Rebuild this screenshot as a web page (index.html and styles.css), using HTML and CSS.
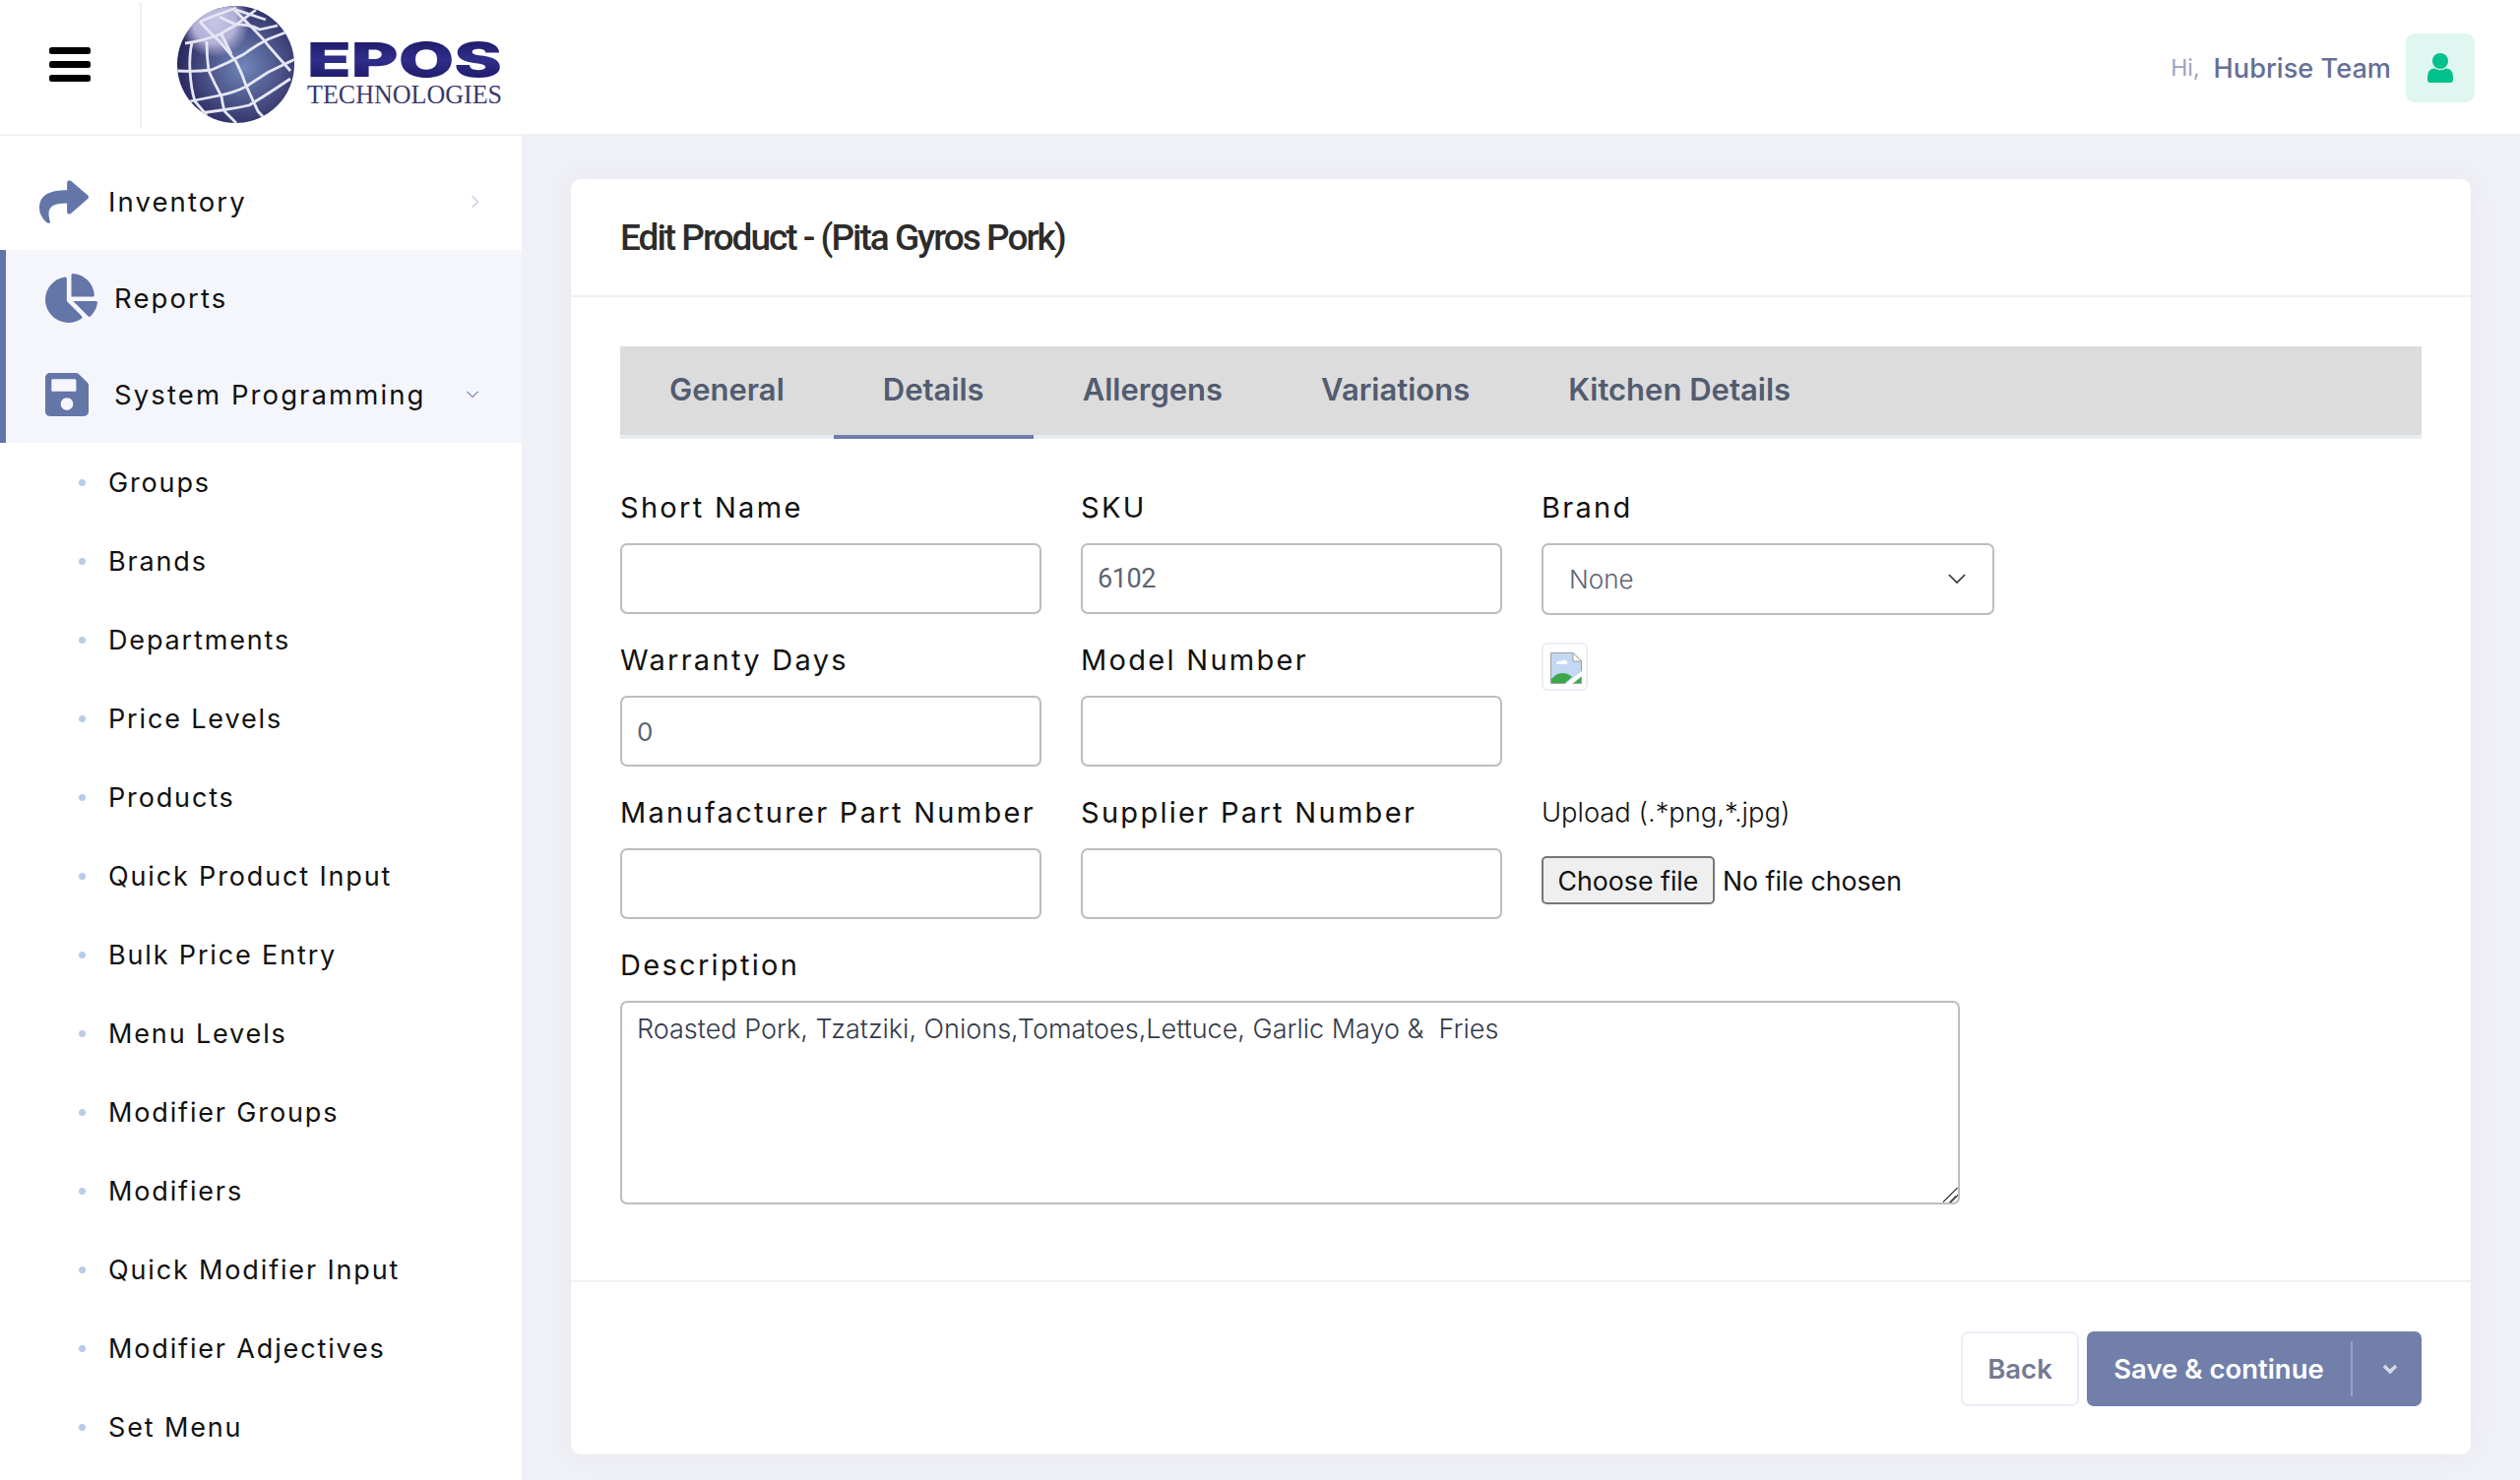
FILE: index.html
```html
<!DOCTYPE html>
<html lang="en">
<head>
    <meta charset="UTF-8">
    <title>Edit Product</title>
    <link rel="stylesheet" href="styles.css">
</head>
<body>
    <header class="topbar">
        <div class="burger-wrap">
            <svg class="burger" viewBox="0 0 42 35" width="42" height="35"><rect width="42" height="7" rx="2.5"/><rect y="14" width="42" height="7" rx="2.5"/><rect y="28" width="42" height="7" rx="2.5"/></svg>
        </div>
        <svg class="logo" viewBox="0 0 360 135" width="360" height="135">
            <defs>
                <radialGradient id="globeFill" cx="57%" cy="52%" r="58%">
                    <stop offset="0" stop-color="#7086b8"/>
                    <stop offset="0.55" stop-color="#4a5288"/>
                    <stop offset="1" stop-color="#27255c"/>
                </radialGradient>
                <radialGradient id="globeTop" cx="32%" cy="14%" r="30%">
                    <stop offset="0" stop-color="#c8c5e6"/>
                    <stop offset="0.6" stop-color="#b4b1d8"/>
                    <stop offset="1" stop-color="#b4b1d8" stop-opacity="0"/>
                </radialGradient>
                <linearGradient id="eposFill" x1="0" y1="0" x2="0" y2="1">
                    <stop offset="0" stop-color="#17105a"/>
                    <stop offset="0.5" stop-color="#2f2e8a"/>
                    <stop offset="1" stop-color="#17105a"/>
                </linearGradient>
                <clipPath id="globeClip"><circle cx="79.5" cy="65.5" r="59.5"/></clipPath>
            </defs>
            <circle cx="79.5" cy="65.5" r="59.5" fill="url(#globeFill)"/>
            <circle cx="79.5" cy="65.5" r="59.5" fill="url(#globeTop)"/>
            <g class="globe-lines" clip-path="url(#globeClip)">
                <path d="M28 44Q45 42 63 35L80 25Q92 24 104 30L122 26"/>
                <path d="M20 72Q40 73 55 71Q72 64 88 55Q100 46 112 40L130 33"/>
                <path d="M33 103Q48 100 63 97Q78 94 90 88Q102 80 113 73L140 60"/>
                <path d="M43 115L65 112Q80 110 93 107Q108 98 120 90L135 80"/>
                <path d="M43 22Q52 32 63 42Q72 52 80 63Q86 75 90 87Q96 100 102 113L112 124"/>
                <path d="M78 10Q90 22 100 32Q108 40 113 47L135 72"/>
                <path d="M35 43Q32 57 33 72Q34 90 38 103L50 117"/>
                <path d="M50 42Q50 57 52 72Q58 85 65 98Q66 105 68 113L80 125"/>
                <path d="M65 35L75 55"/>
                <path d="M43 22Q60 15 80 8"/>
                <path d="M80 10Q95 15 110 20"/>
                <path d="M63 17Q72 22 80 25L100 10"/>
            </g>
            <text class="logo-epos" x="152" y="78" textLength="198" lengthAdjust="spacingAndGlyphs" fill="url(#eposFill)">EPOS</text>
            <text class="logo-tech" x="152" y="105" textLength="198" lengthAdjust="spacingAndGlyphs">TECHNOLOGIES</text>
        </svg>
        <div class="user">
            <span class="user-hi">Hi,</span>
            <span class="user-name">Hubrise Team</span>
            <span class="avatar">
                <svg viewBox="0 0 26 30" width="26" height="30"><circle cx="13" cy="8" r="8"/><path d="M7 15.500Q13 19 19 15.500Q26 16 26 24V27Q26 30 23 30H3Q0 30 0 27V24Q0 16 7 15.500Z"/></svg>
            </span>
        </div>
    </header>

    <div class="layout">
        <nav class="sidebar">
            <a class="menu-item">
                <span class="menu-icon"><svg viewBox="0 0 512 512" width="50" height="50"><path d="M503.691 189.836L327.687 37.851C312.281 24.546 288 35.347 288 56.015v80.053C127.371 137.907 0 170.1 0 322.326c0 61.441 39.581 122.309 83.333 154.132 13.653 9.931 33.111-2.533 28.077-18.631C66.066 312.814 132.917 274.316 288 272.085V360c0 20.7 24.3 31.453 39.687 18.164l176.004-152c11.071-9.562 11.086-26.753 0-36.328z"/></svg></span>
                <span class="menu-text">Inventory</span>
                <svg class="menu-arrow arrow-right" viewBox="0 0 10 16" width="8" height="14"><path d="M1 1l7 7-7 7"/></svg>
            </a>
            <div class="menu-open">
                <a class="menu-item">
                    <span class="menu-icon"><svg viewBox="0 0 544 512" width="53" height="50"><path d="M527.79 288H290.5l158.03 158.03c6.04 6.04 15.98 6.53 22.19.68 38.7-36.46 65.32-85.61 73.13-140.86 1.34-9.46-6.51-17.85-16.06-17.85zm-15.83-64.8C503.72 103.74 408.26 8.28 288.8.04 279.68-.59 272 7.1 272 16.24V240h223.77c9.14 0 16.82-7.68 16.19-16.8zM224 288V50.71c0-9.55-8.39-17.4-17.84-16.06C86.99 51.49-4.1 155.6.14 280.37 4.5 408.51 114.83 513.59 243.03 511.98c50.4-.63 96.97-16.87 135.26-44.03 7.9-5.6 8.42-17.23 1.57-24.08L224 288z"/></svg></span>
                    <span class="menu-text">Reports</span>
                </a>
                <a class="menu-item">
                    <span class="menu-icon"><svg viewBox="0 32 448 448" width="44" height="44"><path d="M433.941 129.941l-83.882-83.882A48 48 0 0 0 316.118 32H48C21.49 32 0 53.49 0 80v352c0 26.51 21.49 48 48 48h352c26.51 0 48-21.49 48-48V163.882a48 48 0 0 0-14.059-33.941zM224 416c-35.346 0-64-28.654-64-64 0-35.346 28.654-64 64-64s64 28.654 64 64c0 35.346-28.654 64-64 64zm96-304.52V212c0 6.627-5.373 12-12 12H76c-6.627 0-12-5.373-12-12V108c0-6.627 5.373-12 12-12h228.52c3.183 0 6.235 1.264 8.485 3.515l3.48 3.48A11.996 11.996 0 0 1 320 111.48z"/></svg></span>
                    <span class="menu-text">System Programming</span>
                    <svg class="menu-arrow arrow-down" viewBox="0 0 16 10" width="14" height="8"><path d="M1 1l7 7 7-7"/></svg>
                </a>
            </div>
            <ul class="submenu">
                <li>Groups</li>
                <li>Brands</li>
                <li>Departments</li>
                <li>Price Levels</li>
                <li>Products</li>
                <li>Quick Product Input</li>
                <li>Bulk Price Entry</li>
                <li>Menu Levels</li>
                <li>Modifier Groups</li>
                <li>Modifiers</li>
                <li>Quick Modifier Input</li>
                <li>Modifier Adjectives</li>
                <li>Set Menu</li>
            </ul>
        </nav>

        <main class="content">
            <section class="card">
                <div class="card-head">
                    <h1>Edit Product - (Pita Gyros Pork)</h1>
                </div>
                <div class="card-body">
                    <div class="tabs">
                        <a class="tab">General</a>
                        <a class="tab active">Details</a>
                        <a class="tab">Allergens</a>
                        <a class="tab">Variations</a>
                        <a class="tab">Kitchen Details</a>
                    </div>
                    <form class="form-grid">
                        <div class="field">
                            <label>Short Name</label>
                            <input type="text">
                        </div>
                        <div class="field">
                            <label>SKU</label>
                            <input type="text" class="narrow" value="6102">
                        </div>
                        <div class="field">
                            <label>Brand</label>
                            <div class="select-wrap">
                                <select><option>None</option></select>
                                <svg viewBox="0 0 20 12" width="18" height="11"><path d="M1 1l9 9 9-9"/></svg>
                            </div>
                        </div>
                        <div class="field">
                            <label>Warranty Days</label>
                            <input type="text" value="0">
                        </div>
                        <div class="field">
                            <label>Model Number</label>
                            <input type="text">
                        </div>
                        <div class="field">
                            <div class="thumb">
                                <svg viewBox="0 0 32 32" width="32" height="32">
                                    <path d="M0.500 0.500H23L31.500 9V31.500H0.500Z" fill="#c3d8f2" stroke="#a0a0a0"/>
                                    <path d="M23 0.500V9H31.500Z" fill="#fff" stroke="#a0a0a0"/>
                                    <path d="M6 12a3.500 3 0 0 1 5-3a3.500 3 0 0 1 6 3Z" fill="#fff"/>
                                    <path d="M1 31V27Q6 21 12 21Q18 21 22 25L15 31Z" fill="#3aa84a"/>
                                    <path d="M15 32L32 19V24L22 32Z" fill="#fff"/>
                                    <path d="M24 31L31 25V31Z" fill="#3aa84a"/>
                                </svg>
                            </div>
                        </div>
                        <div class="field">
                            <label>Manufacturer Part Number</label>
                            <input type="text">
                        </div>
                        <div class="field">
                            <label>Supplier Part Number</label>
                            <input type="text">
                        </div>
                        <div class="field">
                            <label class="upload-label">Upload (.*png,*.jpg)</label>
                            <div class="file-row">
                                <button type="button" class="file-btn">Choose file</button>
                                <span class="file-name">No file chosen</span>
                            </div>
                        </div>
                        <div class="field field-wide">
                            <label>Description</label>
                            <textarea>Roasted Pork, Tzatziki, Onions,Tomatoes,Lettuce, Garlic Mayo &amp;  Fries</textarea>
                        </div>
                    </form>
                </div>
                <div class="card-foot">
                    <button type="button" class="btn-back">Back</button>
                    <div class="btn-save">
                        <span class="btn-save-text">Save &amp; continue</span>
                        <span class="btn-save-arrow"><svg viewBox="0 0 16 11" width="16" height="11"><path d="M2 2l6 6 6-6"/></svg></span>
                    </div>
                </div>
            </section>
        </main>
    </div>
</body>
</html>
```
FILE: styles.css
```css
* {
    box-sizing: border-box;
}

html, body {
    margin: 0;
    height: 100%;
    overflow: hidden;
}

body {
    background: #f0f1f6;
    font-family: Inter, "Noto Sans", sans-serif;
    color: #111;
}

/* top bar */
.topbar {
    height: 136px;
    background: #fff;
    display: flex;
    align-items: flex-start;
    margin-bottom: 2px;
}

.burger-wrap {
    width: 144px;
    height: 128px;
    margin-top: 2px;
    padding: 46px 0 0 50px;
    border-right: 2px solid #eef0f5;
}

.burger {
    display: block;
}

.logo {
    margin-left: 16px;
    flex: none;
}

.globe-lines {
    fill: none;
    stroke: #e6e6f4;
    stroke-width: 2.800;
    stroke-linejoin: round;
    filter: blur(0.4px);
}

.logo-epos {
    font-family: Inter, sans-serif;
    font-weight: 900;
    font-size: 48px;
}

.logo-tech {
    font-family: "Liberation Serif", serif;
    font-size: 27px;
    fill: #3b3868;
}

.user {
    margin-left: auto;
    margin-right: 46px;
    margin-top: 34px;
    display: flex;
    align-items: center;
    height: 70px;
}

.user-hi {
    font-size: 23px;
    color: #9ba3bd;
    margin-right: 14px;
}

.user-name {
    font-size: 27.200px;
    font-weight: 500;
    color: #666f96;
    margin-right: 15px;
}

.avatar {
    width: 70px;
    height: 70px;
    border-radius: 9px;
    background: #e0f7f1;
    display: flex;
    align-items: center;
    justify-content: center;
}

.avatar svg {
    fill: #00c08b;
}

.layout {
    display: flex;
    height: calc(100vh - 138px);
}

/* sidebar */
.sidebar {
    width: 530px;
    flex: none;
    background: #fff;
    padding-top: 18px;
    overflow: hidden;
}

.menu-item {
    height: 98px;
    display: flex;
    align-items: center;
    padding-left: 40px;
    padding-right: 43px;
}

.menu-icon {
    width: 70px;
    flex: none;
}

.menu-icon svg {
    display: block;
    fill: #6475a8;
}

.menu-text {
    font-size: 27.500px;
    letter-spacing: 2.100px;
    color: #111;
}

.menu-arrow {
    margin-left: auto;
    fill: none;
}

.arrow-right {
    stroke: #b9c6ea;
    stroke-width: 1.500;
}

.arrow-down {
    stroke: #7687b8;
    stroke-width: 1.500;
}

.menu-open {
    background: #f5f6fc;
    border-left: 6px solid #6475a8;
}

.submenu {
    list-style: none;
    margin: 0;
    padding: 0;
}

.submenu li {
    height: 80px;
    display: flex;
    align-items: center;
    padding-left: 110px;
    font-size: 27px;
    letter-spacing: 1.850px;
    position: relative;
}

.submenu li::before {
    content: "";
    position: absolute;
    left: 80px;
    top: 37px;
    width: 7px;
    height: 7px;
    border-radius: 50%;
    background: #b9cbe8;
}

/* main card */
.content {
    flex: 1;
    padding: 44px 50px 0;
}

.card {
    background: #fff;
    border-radius: 10px;
    height: 1296px;
    box-shadow: 0 0 30px rgba(82, 63, 105, 0.05);
}

.card-head {
    height: 120px;
    padding-left: 50px;
    display: flex;
    align-items: center;
    border-bottom: 2px solid #eef0f5;
}

.card-head h1 {
    margin: 0;
    font-family: Roboto, sans-serif;
    font-weight: 500;
    font-size: 37px;
    letter-spacing: -2px;
    color: #2c2c2c;
}

.card-body {
    padding: 50px 50px 77px;
    border-bottom: 2px solid #eef0f5;
}

.tabs {
    height: 94px;
    display: flex;
    background: #dcdcdc;
    border-bottom: 4px solid #e9ebf2;
}

.tab {
    height: 94px;
    padding: 0 50px 8px;
    display: flex;
    align-items: center;
    font-size: 31px;
    font-weight: 600;
    color: #535c70;
}

.tab.active {
    box-shadow: inset 0 -4px 0 #6e7dab;
}

.form-grid {
    display: grid;
    grid-template-columns: 428px 428px 460px;
    column-gap: 40px;
    row-gap: 29px;
    margin-top: 52px;
}

.field label {
    display: block;
    height: 36px;
    line-height: 36px;
    margin-bottom: 18px;
    font-size: 29px;
    letter-spacing: 2.300px;
    color: #111;
    white-space: nowrap;
}

.field input[type="text"] {
    display: block;
    width: 100%;
    height: 72px;
    padding: 0 15px;
    border: 2px solid #bdbdbd;
    border-radius: 7px;
    font-family: Inter, sans-serif;
    font-size: 26px;
    color: #5d6474;
    outline: none;
}

.field input.narrow {
    font-family: Roboto, sans-serif;
    font-size: 27px;
    letter-spacing: -0.400px;
}

.select-wrap {
    position: relative;
    height: 72px;
}

.select-wrap select {
    appearance: none;
    width: 100%;
    height: 73px;
    padding: 0 26px;
    background: #fff;
    border: 2px solid #bdbdbd;
    border-radius: 7px;
    font-family: Inter, sans-serif;
    font-size: 26px;
    font-weight: 300;
    color: #5d6474;
    outline: none;
}

.select-wrap svg {
    position: absolute;
    right: 29px;
    top: 31px;
    fill: none;
    stroke: #333;
    stroke-width: 1.800;
}

.thumb {
    width: 47px;
    height: 49px;
    padding: 8px 0 0 7px;
    border: 2px solid #eaeef5;
    border-radius: 6px;
}

.thumb svg {
    display: block;
}

.field label.upload-label {
    font-size: 27.300px;
    font-weight: 300;
    letter-spacing: 0;
    margin-bottom: 26px;
}

.file-row {
    display: flex;
    align-items: center;
    gap: 8px;
}

.file-btn {
    height: 49px;
    width: 176px;
    padding: 0;
    background: #efefef;
    border: 2px solid #767676;
    border-radius: 5px;
    font-family: Inter, sans-serif;
    font-size: 26.700px;
    color: #111;
}

.file-name {
    font-size: 26.700px;
    color: #111;
}

.field-wide {
    grid-column: 1 / -1;
}

.field textarea {
    display: block;
    width: 1361px;
    height: 207px;
    padding: 10px 15px;
    border: 2px solid #bdbdbd;
    border-radius: 7px;
    font-family: Inter, sans-serif;
    font-size: 27px;
    font-weight: 300;
    color: #333a4a;
    outline: none;
    resize: both;
}

.field textarea::-webkit-resizer {
    background: linear-gradient(135deg, transparent 44%, #555 44%, #555 52%, transparent 52%, transparent 70%, #555 70%, #555 78%, transparent 78%);
}

.card-foot {
    display: flex;
    justify-content: flex-end;
    gap: 8px;
    padding: 50px 50px 0;
}

.btn-back {
    width: 120px;
    height: 76px;
    background: #fff;
    border: 2px solid #eaeefa;
    border-radius: 7px;
    font-family: Inter, sans-serif;
    font-size: 27.500px;
    font-weight: 600;
    color: #737a92;
}

.btn-save {
    width: 340px;
    height: 76px;
    padding: 10px 0;
    display: flex;
    align-items: center;
    background: #717faa;
    border-radius: 7px;
    color: #fff;
}

.btn-save-text {
    flex: 1;
    height: 56px;
    line-height: 56px;
    text-align: center;
    font-size: 27.500px;
    font-weight: 600;
    border-right: 2px solid #98a2c2;
}

.btn-save-arrow {
    width: 70px;
    padding-left: 5px;
    text-align: center;
}

.btn-save-arrow svg {
    fill: none;
    stroke: #d4d8e6;
    stroke-width: 3.500;
}
```
